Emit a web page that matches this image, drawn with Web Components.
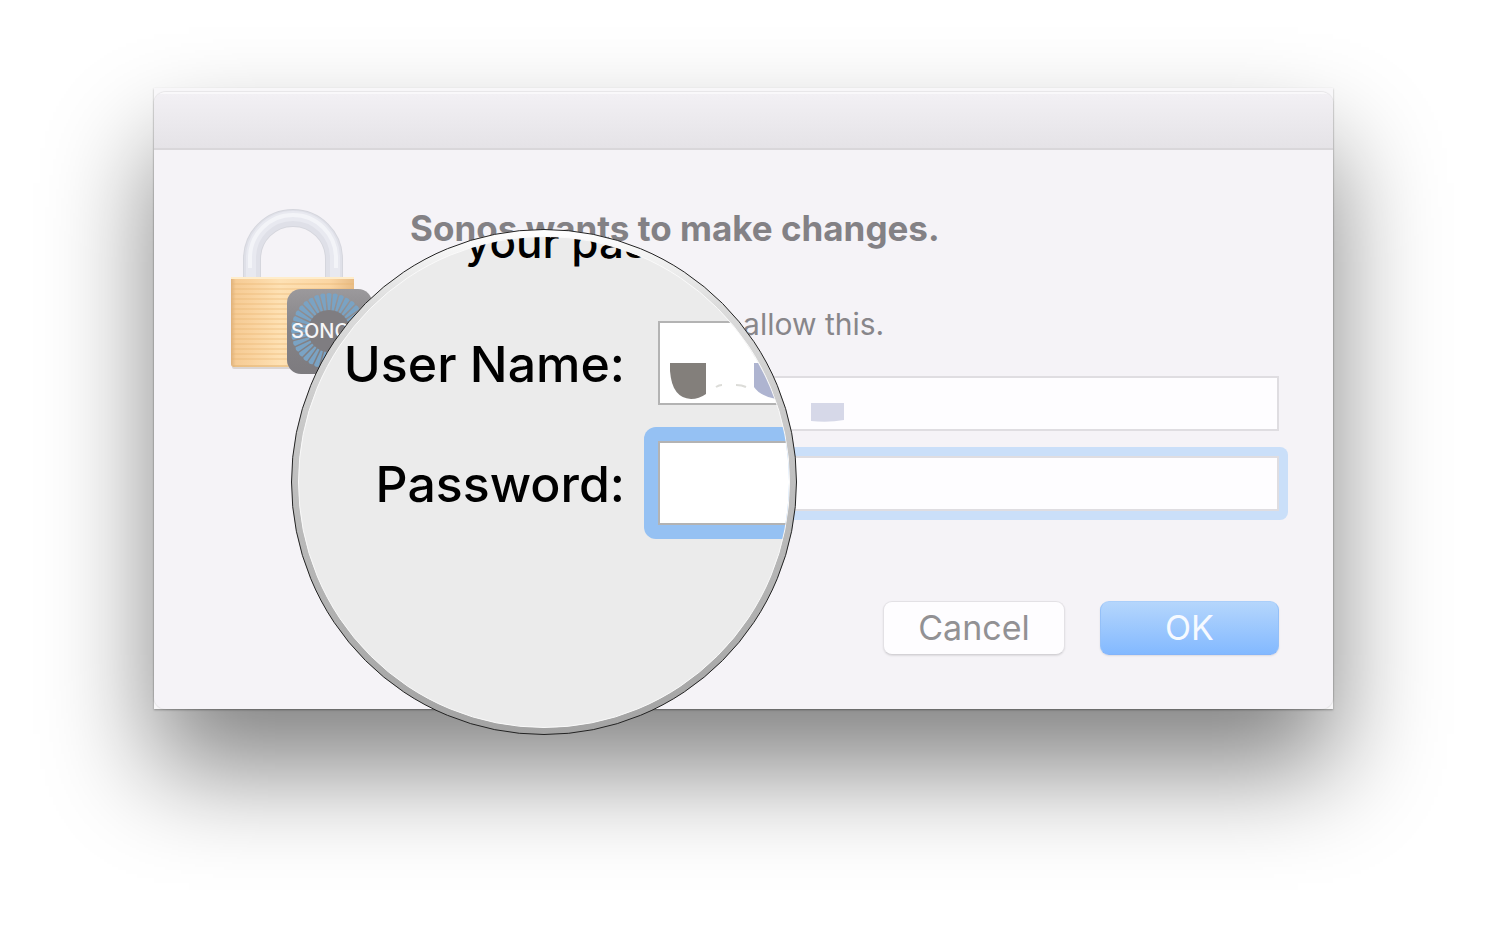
<!DOCTYPE html>
<html lang="en">
<head>
<meta charset="utf-8">
<title>Sonos wants to make changes.</title>
<style>
body {
  margin: 0;
  background: #fff;
  font-family: Inter, Roboto, sans-serif;
}
</style>
</head>
<body>
<auth-page></auth-page>

<script>
// Padlock with the Sonos badge in its corner
class LockIcon extends HTMLElement {
  constructor() {
    super();
    const shadow = this.attachShadow({ mode: 'open' });

    // Badge rays: tapered spokes around the centre
    let rays = '';
    for (let i = 0; i < 36; i++) {
      rays += `<path d="M97 103h2l1.500-17q-2.500-2-5 0z" transform="rotate(${i * 10} 98 123)" />`;
    }

    shadow.innerHTML = `
      <style>
        :host { display: block; width: 142px; height: 170px; }
        svg { display: block; }
      </style>
      <svg width="142" height="170" viewBox="0 0 142 170" role="img" aria-label="Locked">
        <defs>
          <linearGradient id="body" x1="0" x2="1">
            <stop offset="0" stop-color="#dfb27c" />
            <stop offset=".04" stop-color="#f6cc96" />
            <stop offset=".16" stop-color="#f9d29e" />
            <stop offset=".4" stop-color="#fee1b4" />
            <stop offset=".8" stop-color="#fbd6a3" />
            <stop offset="1" stop-color="#e8bc86" />
          </linearGradient>
          <pattern id="lines" width="8" height="5" patternUnits="userSpaceOnUse">
            <rect width="8" height="2" fill="#eab56f" opacity=".3" />
          </pattern>
          <linearGradient id="badge" x2="0" y2="1">
            <stop offset="0" stop-color="#9b999c" />
            <stop offset=".5" stop-color="#858386" />
            <stop offset="1" stop-color="#7d7b7f" />
          </linearGradient>
        </defs>
        <path d="M21 70V51a41 41 0 0 1 82 0v19" fill="none" stroke="#d5d6dd" stroke-width="18" />
        <path d="M21 70V51a41 41 0 0 1 82 0v19" fill="none" stroke="#dfe0e8" stroke-width="16" />
        <path d="M20 70V50a42 42 0 0 1 84 0v20" fill="none" stroke="#e8e9f0" stroke-width="10" />
        <path d="M19 60V50a43 43 0 0 1 86 0v10" fill="none" stroke="#f3f4f8" stroke-width="4" />
        <rect x="1" y="157" width="121" height="4" rx="2" fill="#c9c1ba" opacity=".6" />
        <path d="M0 69h123v87q0 3-3 3H3q-3 0-3-3z" fill="url(#body)" />
        <path d="M0 73h123v82H0z" fill="url(#lines)" />
        <path d="M0 69h123v2H0z" fill="#ffedcb" />
        <path d="M2 158h119" stroke="#e0b273" stroke-width="1" />
        <rect x="56" y="81" width="85" height="85" rx="14" fill="url(#badge)" />
        <g fill="#7aa3c4">${rays}</g>
        <circle cx="98" cy="123" r="21" fill="#7f7d81" />
        <text x="60" y="130" font-family="Inter, sans-serif" font-size="20" font-weight="500" fill="#f6f6f8">SONOS</text>
      </svg>
    `;
  }
}
customElements.define('lock-icon', LockIcon);

// Text box, with a slot for what lies over its value
class TextField extends HTMLElement {
  constructor() {
    super();
    const shadow = this.attachShadow({ mode: 'open' });
    const type = this.getAttribute('type') || 'text';
    shadow.innerHTML = `
      <style>
        :host { display: block; position: relative; height: 55px; }
        input {
          display: block;
          position: relative;
          box-sizing: border-box;
          width: 100%;
          height: 100%;
          margin: 0;
          padding: 0 12px;
          border: 2px solid #dfdde1;
          border-radius: 0;
          background: #fefdff;
          font: 30px Inter, sans-serif;
          outline: none;
        }
        :host([active]) .ring {
          position: absolute;
          inset: -9px;
          border-radius: 8px;
          background: #cadff9;
        }
        ::slotted(svg) { position: absolute; top: 0; left: 0; }
      </style>
      <div class="ring"></div>
      <input type="${type}" aria-label="${this.getAttribute('label')}">
      <slot></slot>
    `;
  }
}
customElements.define('text-field', TextField);

class PushButton extends HTMLElement {
  constructor() {
    super();
    const shadow = this.attachShadow({ mode: 'open' });
    shadow.innerHTML = `
      <style>
        :host { display: block; }
        button {
          box-sizing: border-box;
          display: block;
          width: 182px;
          height: 54px;
          padding: 0;
          border: 1px solid #e3e1e5;
          border-bottom-color: #d4d2d6;
          border-radius: 9px;
          background: #fefdff;
          color: #929194;
          font: 34px/50px Inter, sans-serif;
          box-shadow: 0 1px 2px rgba(0, 0, 0, 0.1);
        }
        :host([primary]) button {
          width: 179px;
          border-color: #abcffa #94c0f8 #83b4fb;
          background: linear-gradient(#b5d6fc, #83b9ff);
          color: #f6faff;
        }
      </style>
      <button type="button"><slot></slot></button>
    `;
  }
}
customElements.define('push-button', PushButton);

// Label and text box as seen through the magnifier
class LensRow extends HTMLElement {
  constructor() {
    super();
    const shadow = this.attachShadow({ mode: 'open' });
    const type = this.getAttribute('type') || 'text';
    shadow.innerHTML = `
      <style>
        :host {
          display: grid;
          grid-template-columns: 326px 200px;
          column-gap: 33px;
          align-items: center;
        }
        label {
          padding-top: 2px;
          text-align: right;
          white-space: nowrap;
          font-size: 50px;
          font-weight: 500;
          line-height: 80px;
          color: #000;
        }
        .box { position: relative; height: 84px; }
        input {
          display: block;
          position: relative;
          box-sizing: border-box;
          width: 100%;
          height: 100%;
          padding: 0 12px;
          border: 2px solid #b3b3b3;
          border-radius: 0;
          background: #fff;
          font: 44px Inter, sans-serif;
          outline: none;
        }
        :host([active]) .ring {
          position: absolute;
          inset: -14px;
          border-radius: 12px;
          background: #95c1f3;
        }
        ::slotted(svg) { position: absolute; top: 0; left: 0; }
      </style>
      <label for="field">${this.getAttribute('label')}</label>
      <div class="box">
        <div class="ring"></div>
        <input id="field" type="${type}">
        <slot></slot>
      </div>
    `;
  }
}
customElements.define('lens-row', LensRow);

// Round magnifier
class ZoomLens extends HTMLElement {
  constructor() {
    super();
    const shadow = this.attachShadow({ mode: 'open' });
    shadow.innerHTML = `
      <style>
        :host {
          display: block;
          box-sizing: border-box;
          width: 506px;
          height: 506px;
          padding: 6px;
          border: 1px solid #222;
          border-radius: 50%;
          background: linear-gradient(#fff, #dcdcdc 15%, #bfbfbf 50%, #a3a3a3);
        }
        .glass {
          box-sizing: border-box;
          height: 100%;
          border: 1px solid #fafafa;
          border-radius: 50%;
          background: #ebebeb;
          overflow: hidden;
        }
        p {
          margin: 0 0 74px;
          padding-left: 166px;
          font-size: 44px;
          font-weight: 500;
          line-height: 10px;
          white-space: nowrap;
          color: #000;
        }
        .rows { display: grid; row-gap: 36px; }
      </style>
      <div class="glass">
        <p>your pas</p>
        <div class="rows">
          <lens-row label="User Name:">
            <svg width="200" height="84" viewBox="0 0 200 84" aria-hidden="true">
              <path d="M12 42h36v31q-7 5-15 5Q14 77 12 50z" fill="#837f7b" />
              <path d="M58 66q3-2 6-2M78 64q6 0 10 2" fill="none" stroke="#dcdcd8" stroke-width="2" />
              <path d="M96 42h36v36h-14q-16-3-22-12z" fill="#aeb4d0" />
            </svg>
          </lens-row>
          <lens-row label="Password:" type="password" active></lens-row>
        </div>
      </div>
    `;
  }
}
customElements.define('zoom-lens', ZoomLens);

class AuthDialog extends HTMLElement {
  constructor() {
    super();
    const shadow = this.attachShadow({ mode: 'open' });
    shadow.innerHTML = `
      <style>
        :host {
          display: block;
          position: relative;
          padding-top: 4px;
          background: #f8f7f9;
          box-shadow: 0 60px 100px rgba(0, 0, 0, 0.49), 0 1px 2px rgba(0, 0, 0, 0.3);
        }
        .window {
          border-radius: 12px;
          background: #f5f3f7;
          box-shadow: 0 0 1px 1px rgba(0, 0, 0, 0.07);
          overflow: hidden;
        }
        header {
          box-sizing: border-box;
          height: 58px;
          border-top: 2px solid #f9f8fa;
          border-bottom: 2px solid #d9d7da;
          background: linear-gradient(#f2f0f4, #e5e3e7);
        }
        main {
          display: grid;
          grid-template-columns: 142px 1fr;
          column-gap: 37px;
          padding: 58px 54px 54px 77px;
        }
        h1 {
          margin: 0;
          font-size: 35px;
          font-weight: 700;
          line-height: 40px;
          color: #838185;
        }
        p {
          margin: 58px 0 34px;
          font-size: 30px;
          line-height: 36px;
          color: #88868a;
        }
        .fields { display: grid; row-gap: 25px; padding-left: 220px; }
        footer { display: flex; justify-content: flex-end; gap: 35px; margin-top: 90px; }
        zoom-lens { position: absolute; left: 137px; top: 141px; }
      </style>
      <div class="window">
        <header></header>
        <main>
          <lock-icon></lock-icon>
          <div>
            <h1>Sonos wants to make changes.</h1>
            <p>Type your password to allow this.</p>
            <div class="fields">
              <text-field label="User Name">
                <svg width="260" height="55" viewBox="0 0 260 55" aria-hidden="true">
                  <path d="M181 27h33v17q-16 3-33 1z" fill="#d6d8e8" />
                </svg>
              </text-field>
              <text-field label="Password" type="password" active></text-field>
            </div>
            <footer>
              <push-button>Cancel</push-button>
              <push-button primary>OK</push-button>
            </footer>
          </div>
        </main>
      </div>
      <zoom-lens></zoom-lens>
    `;
  }
}
customElements.define('auth-dialog', AuthDialog);

class AuthPage extends HTMLElement {
  constructor() {
    super();
    const shadow = this.attachShadow({ mode: 'open' });
    shadow.innerHTML = `
      <style>
        :host { display: block; box-sizing: border-box; min-height: 100vh; padding: 88px 155px 0 154px; }
      </style>
      <auth-dialog></auth-dialog>
    `;
  }
}
customElements.define('auth-page', AuthPage);
</script>
</body>
</html>
